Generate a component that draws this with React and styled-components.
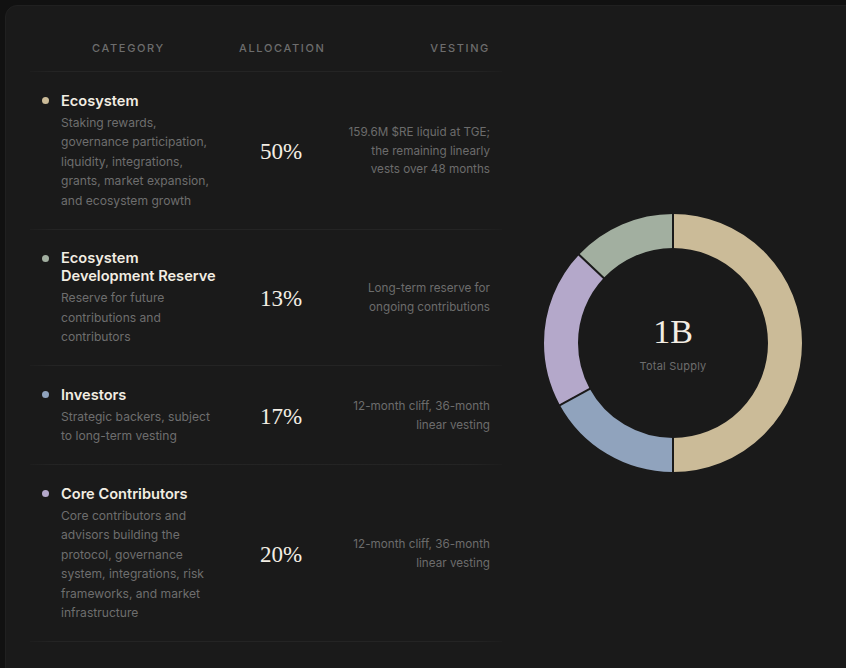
import React from 'react';
import styled, { createGlobalStyle } from 'styled-components';

const GlobalStyle = createGlobalStyle`
  html, body {
    margin: 0;
    padding: 0;
    background: #111111;
    overflow: hidden;
  }
  body {
    font-family: Inter, "Noto Sans", sans-serif;
    -webkit-font-smoothing: antialiased;
  }
`;

const rows = [
  {
    title: 'Ecosystem',
    desc: 'Staking rewards, governance participation, liquidity, integrations, grants, market expansion, and ecosystem growth',
    pct: '50%',
    vesting: '159.6M $RE liquid at TGE; the remaining linearly vests over 48 months',
    color: '#cbbb98',
  },
  {
    title: 'Ecosystem Development Reserve',
    desc: 'Reserve for future contributions and contributors',
    pct: '13%',
    vesting: 'Long-term reserve for ongoing contributions',
    color: '#a2afa0',
  },
  {
    title: 'Investors',
    desc: 'Strategic backers, subject to long-term vesting',
    pct: '17%',
    vesting: '12-month cliff, 36-month linear vesting',
    color: '#90a3bd',
  },
  {
    title: 'Core Contributors',
    desc: 'Core contributors and advisors building the protocol, governance system, integrations, risk frameworks, and market infrastructure',
    pct: '20%',
    vesting: '12-month cliff, 36-month linear vesting',
    color: '#b4a8ca',
  },
];

// order around the ring, clockwise from 12 o'clock
const slices = [
  { value: 50, color: '#cbbb98' },
  { value: 17, color: '#90a3bd' },
  { value: 20, color: '#b4a8ca' },
  { value: 13, color: '#a2afa0' },
];

function Donut() {
  const size = 262;
  const c = size / 2;
  const r = 112;
  const circ = 2 * Math.PI * r;
  let acc = 0;
  const parts = slices.map((s) => {
    const start = acc;
    acc += s.value;
    return { ...s, start };
  });

  return (
    <svg width={size} height={size} viewBox={`0 0 ${size} ${size}`}>
      <g transform={`rotate(-90 ${c} ${c})`}>
        {parts.map((p, i) => (
          <circle
            key={i}
            cx={c}
            cy={c}
            r={r}
            fill="none"
            stroke={p.color}
            strokeWidth={34}
            strokeDasharray={`${(p.value / 100) * circ} ${circ}`}
            strokeDashoffset={-(p.start / 100) * circ}
          />
        ))}
      </g>
      {parts.map((p, i) => {
        const a = (p.start / 100) * Math.PI * 2;
        const x1 = c + Math.sin(a) * (r - 18);
        const y1 = c - Math.cos(a) * (r - 18);
        const x2 = c + Math.sin(a) * (r + 18);
        const y2 = c - Math.cos(a) * (r + 18);
        return <line key={i} x1={x1} y1={y1} x2={x2} y2={y2} stroke="#1a1a1a" strokeWidth={2} />;
      })}
    </svg>
  );
}

function App() {
  return (
    <>
      <GlobalStyle />
      <Card>
        <Table>
          <HeadRow>
            <HeadCell align="center">Category</HeadCell>
            <HeadCell align="center">Allocation</HeadCell>
            <HeadCell align="right">Vesting</HeadCell>
          </HeadRow>
          {rows.map((row) => (
            <Row key={row.title}>
              <CategoryCell>
                <Dot color={row.color} />
                <CategoryText>
                  <Title>{row.title}</Title>
                  <Desc>{row.desc}</Desc>
                </CategoryText>
              </CategoryCell>
              <Percent>{row.pct}</Percent>
              <Vesting>{row.vesting}</Vesting>
            </Row>
          ))}
        </Table>
        <ChartArea>
          <DonutWrap>
            <Donut />
            <Center>
              <Supply>1B</Supply>
              <SupplyLabel>Total Supply</SupplyLabel>
            </Center>
          </DonutWrap>
        </ChartArea>
      </Card>
    </>
  );
}

const Card = styled.div`
  margin: 5px 0 0 5px;
  width: 900px;
  min-height: 700px;
  box-sizing: border-box;
  padding: 18px 24px 0 24px;
  background: #1a1a1a;
  border: 1px solid #202020;
  border-radius: 12px;
  display: flex;
  align-items: flex-start;
`;

const Table = styled.div`
  width: 472px;
  flex-shrink: 0;
  display: flex;
  flex-direction: column;
`;

const Divided = styled.div`
  display: grid;
  grid-template-columns: 197px 108px 167px;
  position: relative;

  &::after {
    content: '';
    position: absolute;
    left: 0;
    right: 0;
    bottom: 0;
    height: 1px;
    background: linear-gradient(
      90deg,
      rgba(255, 255, 255, 0.015),
      rgba(255, 255, 255, 0.045) 5%,
      rgba(255, 255, 255, 0.045) 94%,
      rgba(255, 255, 255, 0.01)
    );
  }
`;

const HeadRow = styled(Divided)`
  padding: 16px 0 16px;
`;

const HeadCell = styled.div`
  text-align: ${({ align }) => align};
  padding: 0 12px;
  font-size: 11px;
  line-height: 16px;
  font-weight: 500;
  letter-spacing: 0.15em;
  text-transform: uppercase;
  color: #6d6d6d;
`;

const Row = styled(Divided)`
  padding: 19.5px 0;
  align-items: center;
`;

const CategoryCell = styled.div`
  display: flex;
  align-items: flex-start;
  gap: 12px;
  padding: 0 10px 0 12px;
`;

const Dot = styled.span`
  flex-shrink: 0;
  width: 7px;
  height: 7px;
  margin-top: 5.5px;
  border-radius: 50%;
  background: ${({ color }) => color};
`;

const CategoryText = styled.div`
  display: flex;
  flex-direction: column;
  gap: 3px;
`;

const Title = styled.div`
  font-size: 14.6px;
  line-height: 18px;
  font-weight: 600;
  color: #f2ede2;
`;

const Desc = styled.div`
  font-size: 12.1px;
  line-height: 19.5px;
  color: #6e6e6e;
`;

const Percent = styled.div`
  text-align: center;
  font-family: "Liberation Serif", "DejaVu Serif", serif;
  font-size: 23px;
  color: #f3eee4;
  padding-top: 2px;
`;

const Vesting = styled.div`
  text-align: right;
  padding: 0 12px 0 6px;
  font-size: 11.7px;
  line-height: 18.5px;
  color: #6c6c6c;
`;

const ChartArea = styled.div`
  flex: 1;
  display: flex;
  justify-content: center;
  padding: 188px 0 0 0;
  max-width: 342px;
`;

const DonutWrap = styled.div`
  position: relative;
  width: 262px;
  height: 262px;
`;

const Center = styled.div`
  position: absolute;
  inset: 0;
  display: flex;
  flex-direction: column;
  align-items: center;
  justify-content: center;
`;

const Supply = styled.div`
  font-family: "Liberation Serif", "DejaVu Serif", serif;
  font-size: 34px;
  line-height: 38px;
  color: #f3eee4;
`;

const SupplyLabel = styled.div`
  margin-top: 8px;
  font-size: 11px;
  color: #6d6d6d;
  letter-spacing: 0.02em;
`;

export default App;
